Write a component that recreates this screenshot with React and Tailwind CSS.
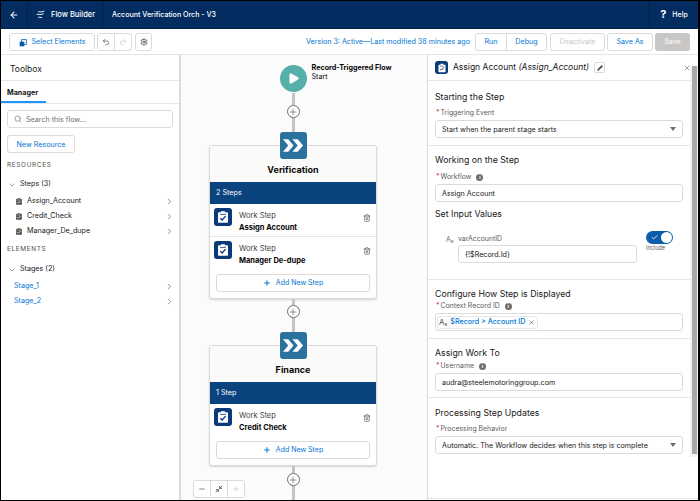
import { ArrowLeft, Undo2, Redo2, Settings, Search, ChevronDown, ChevronRight, Trash2, Plus, Minus, X, Pencil, Check, Play, Minimize2 } from 'lucide-react'

function ClipboardIcon({ className, body = 'white', mark = '#0b3a78' }) {
  return (
    <svg viewBox="0 0 24 24" className={className}>
      <path fill={body} d="M8.5 2h7v2H19a1.5 1.5 0 0 1 1.5 1.5v15A1.5 1.5 0 0 1 19 22H5a1.5 1.5 0 0 1-1.5-1.5v-15A1.5 1.5 0 0 1 5 4h3.5z" />
      <path d="M7 7.5h10" stroke={mark} strokeWidth="1.4" fill="none" />
      <path d="M7.5 14l3 3 6-6.5" stroke={mark} strokeWidth="2.4" fill="none" />
    </svg>
  )
}

function StepIcon({ size, icon }) {
  return (
    <span className={`${size} shrink-0 rounded-[3px] bg-[#0b3a78] flex items-center justify-center`}>
      <ClipboardIcon className={icon} />
    </span>
  )
}

function PlusNode() {
  return (
    <span className="w-[13px] h-[13px] shrink-0 rounded-full border border-[#706e6b] bg-white flex items-center justify-center">
      <Plus className="w-[10px] h-[10px] text-[#514f4d]" strokeWidth={1.5} />
    </span>
  )
}

function Line({ h }) {
  return <div className={`w-[3px] shrink-0 bg-[#c4c4c4] ${h}`} />
}

function StepRow({ name, border }) {
  return (
    <div className={`h-[33px] flex items-start pl-[4px] pr-[5px] pt-[4px] ${border ? 'border-b border-[#e5e5e5]' : ''}`}>
      <StepIcon size="w-[18px] h-[18px]" icon="w-[14px] h-[14px]" />
      <div className="ml-[7px] flex-1 pt-[2px] leading-[12px]">
        <div className="text-[7.5px] text-[#3e3e3c]">Work Step</div>
        <div className="text-[7.5px] font-bold text-[#080707]">{name}</div>
      </div>
      <Trash2 className="w-2 h-2 mt-[6px] text-[#706e6b]" strokeWidth={2.4} />
    </div>
  )
}

function StageCard({ title, count, children }) {
  return (
    <div className="shrink-0 flex flex-col items-center">
      <span className="relative z-10 w-[27px] h-[27px] rounded-[3px] bg-[#2a739e] flex items-center justify-center">
        <svg viewBox="0 0 19 12" className="w-[20px] h-[13px]">
          <polygon fill="white" points="0,0 5,0 10,6 5,12 0,12 5,6" />
          <polygon fill="white" points="9,0 14,0 19,6 14,12 9,12 14,6" />
        </svg>
      </span>
      <div className="w-[168px] -mt-[14px] rounded-[3px] border border-[#dddbda] bg-white shadow-[0_1px_2px_rgba(0,0,0,0.16)]">
        <div className="h-[36px] bg-[#fafaf9] flex items-end justify-center pb-[6px] text-[9px] leading-[12px] font-bold text-[#080707]">{title}</div>
        <div className="h-[22px] bg-[#0b437f] pl-[6px] flex items-center text-[7.2px] text-white">{count}</div>
        {children}
        <div className="px-[6px] pt-[4px] pb-[6px]">
          <div className="h-[18px] rounded-[3px] border border-[#dddbda] bg-white flex items-center justify-center gap-[5px] text-[7px] text-[#0176d3]">
            <Plus className="w-2 h-2" strokeWidth={3} />
            Add New Step
          </div>
        </div>
      </div>
    </div>
  )
}

function Label({ text, info }) {
  return (
    <div className="h-[11px] mb-px flex items-center text-[6.9px] leading-none">
      <span className="text-[#c23934] ml-px mr-px">*</span>
      <span className="text-[#5c5c5c]">{text}</span>
      {info && (
        <span className="ml-[5px] w-[7px] h-[7px] rounded-full bg-[#706e6b] text-white flex items-center justify-center text-[5px] font-bold">i</span>
      )}
    </div>
  )
}

function Field({ children, caret }) {
  return (
    <div className="h-[18px] rounded-[3px] border border-[#dddbda] bg-white flex items-center px-[6px] text-[7.15px] text-[#181818]">
      <span className="flex-1 pt-[2px]">{children}</span>
      {caret && <span className="w-0 h-0 border-l-[3px] border-r-[3px] border-t-[4px] border-l-transparent border-r-transparent border-t-[#706e6b]" />}
    </div>
  )
}

function TreeRow({ icon, label, link }) {
  return (
    <div className="h-[15px] flex items-center pr-[5px]">
      {icon ? (
        <>
          <ClipboardIcon className="ml-[14px] w-[8px] h-[9px]" body="#514f4d" mark="white" />
          <span className="ml-[4px] flex-1 text-[7.15px] text-[#181818]">{label}</span>
        </>
      ) : (
        <span className={`ml-[13px] flex-1 text-[7.15px] ${link ? 'text-[#0176d3]' : ''}`}>{label}</span>
      )}
      <ChevronRight className="w-[9px] h-[9px] text-[#514f4d]" strokeWidth={1.6} />
    </div>
  )
}

function Btn({ children, cls = '' }) {
  return <div className={`h-[18px] pt-[2px] rounded-[3px] border border-[#dddbda] bg-white flex items-center justify-center text-[7.15px] text-[#0176d3] ${cls}`}>{children}</div>
}

function Heading({ children, cls = '' }) {
  return <div className={`text-[8.75px] leading-[12px] text-[#181818] ${cls}`}>{children}</div>
}

export default function App() {
  return (
    <div className="w-[700px] h-[501px] bg-black pt-px pl-px pr-[2px] pb-px overflow-hidden" style={{ fontFamily: 'Inter, "Liberation Sans", sans-serif' }}>
      <div className="w-full h-full bg-white flex flex-col overflow-hidden">
        {/* Header */}
        <header className="h-[28px] shrink-0 bg-[#032d60] border-b border-[#021f45] flex items-center text-white text-[7.5px] font-medium">
          <div className="w-[27px] h-full flex items-center justify-center border-r border-[#021f45]">
            <ArrowLeft className="w-[10px] h-[10px]" strokeWidth={2.5} />
          </div>
          <div className="w-[75px] h-full flex items-center pl-[8px] gap-[6px] border-r border-[#021f45]">
            <svg viewBox="0 0 12 12" className="w-[9px] h-[9px]" fill="none" stroke="white" strokeWidth="1.3">
              <path d="M3 2.5C5 1.5 7 3.5 11 1.5" />
              <path d="M1 6C4 5 6 7 10 5" />
              <path d="M3 9.8C5 8.8 6 10.8 8 9.8" />
            </svg>
            <span className="pt-px">Flow Builder</span>
          </div>
          <div className="pl-[9px] pt-px flex-1 text-[7.1px]">Account Verification Orch - V3</div>
          <div className="w-[49px] h-full flex items-center justify-center gap-[6px] border-l border-[#021f45] text-[7px]">
            <span className="text-[11px] font-bold">?</span>
            <span className="pt-px">Help</span>
          </div>
        </header>

        {/* Toolbar */}
        <div className="h-[26px] shrink-0 flex items-center pl-[8px] pr-[8px] border-b border-[#e5e5e5] text-[7.15px]">
          <Btn cls="w-[86px] gap-[5px]">
            <svg viewBox="0 0 12 12" className="w-[8px] h-[8px]">
              <rect x="4" y="1" width="7" height="7" fill="none" stroke="#0b5cab" strokeWidth="1.2" />
              <rect x="1" y="4" width="7" height="7" fill="#0b5cab" />
            </svg>
            Select Elements
          </Btn>
          <div className="ml-[2px] h-[18px] w-[35px] flex rounded-[3px] border border-[#dddbda]">
            <div className="flex-1 flex items-center justify-center border-r border-[#dddbda]">
              <Undo2 className="w-[8px] h-[8px] text-[#514f4d]" />
            </div>
            <div className="flex-1 flex items-center justify-center">
              <Redo2 className="w-[8px] h-[8px] text-[#c9c7c5]" />
            </div>
          </div>
          <div className="ml-[3px] w-[17px] h-[18px] rounded-[3px] border border-[#dddbda] flex items-center justify-center">
            <Settings className="w-[8px] h-[8px] text-[#514f4d]" strokeWidth={2.5} />
          </div>
          <div className="ml-auto pt-[2px] text-[#0176d3] mr-[5px]">Version 3: Active—Last modified 38 minutes ago</div>
          <div className="h-[18px] w-[72px] pt-0 flex rounded-[3px] border border-[#dddbda] text-[#0176d3]">
            <div className="w-[31px] pt-[2px] flex items-center justify-center border-r border-[#dddbda]">Run</div>
            <div className="flex-1 pt-[2px] flex items-center justify-center">Debug</div>
          </div>
          <div className="ml-[3px] w-[55px] h-[18px] pt-[2px] rounded-[3px] border border-[#dddbda] flex items-center justify-center text-[#c9c7c5]">Deactivate</div>
          <Btn cls="ml-[2px] w-[46px]">Save As</Btn>
          <div className="ml-[2px] w-[35px] h-[18px] pt-[2px] rounded-[3px] bg-[#c9c7c5] flex items-center justify-center text-white">Save</div>
        </div>

        <div className="flex-1 flex min-h-0">
          {/* Toolbox */}
          <aside className="w-[180px] shrink-0 border-r-2 border-[#dddbda] flex flex-col">
            <div className="h-[26px] shrink-0 pt-[3px] flex items-center pl-[9px] text-[8.5px] text-[#181818] border-b border-[#e5e5e5]">Toolbox</div>
            <div className="h-[23px] shrink-0 pt-[3px] border-b border-[#e5e5e5] relative flex items-center pl-[6px] text-[7.2px] font-bold text-[#181818]">
              Manager
              <span className="absolute left-0 bottom-0 w-[45px] h-[2px] bg-[#1b96ff]" />
            </div>
            <div className="px-[6px] pt-[6px]">
              <div className="h-[18px] rounded-[3px] border border-[#dddbda] flex items-center pl-[6px] gap-[4px] text-[7.15px] text-[#706e6b]">
                <Search className="w-[8px] h-[8px]" strokeWidth={2} />
                <span className="pt-[2px]">Search this flow...</span>
              </div>
              <Btn cls="mt-[7px] w-[68px]">New Resource</Btn>
            </div>
            <div className="mt-[7px] pl-[6px] h-[12px] flex items-center text-[6.5px] tracking-[0.6px] text-[#514f4d]">RESOURCES</div>
            <div className="mt-[5px] pl-[7px] h-[15px] flex items-center gap-[4px] text-[7.15px] text-[#181818]">
              <ChevronDown className="w-[8px] h-[8px] text-[#706e6b]" />
              Steps (3)
            </div>
            <div className="mt-[2px]">
              <TreeRow icon label="Assign_Account" />
              <TreeRow icon label="Credit_Check" />
              <TreeRow icon label="Manager_De_dupe" />
            </div>
            <div className="mt-[5px] pl-[6px] h-[12px] flex items-center text-[6.5px] tracking-[0.6px] text-[#514f4d]">ELEMENTS</div>
            <div className="mt-[6px] pl-[7px] h-[15px] flex items-center gap-[4px] text-[7.15px] text-[#181818]">
              <ChevronDown className="w-[8px] h-[8px] text-[#706e6b]" />
              Stages (2)
            </div>
            <div className="mt-[2px]">
              <TreeRow link label="Stage_1" />
              <TreeRow link label="Stage_2" />
            </div>
          </aside>

          {/* Canvas */}
          <main className="relative w-[246px] shrink-0 bg-[#fbfbfb] overflow-hidden flex flex-col items-center pt-[10px] pr-[22px]">
            <div className="relative shrink-0">
              <span className="w-[27px] h-[27px] rounded-full bg-[#54b0a9] flex items-center justify-center">
                <Play className="w-[13px] h-[13px] text-white ml-px" fill="white" strokeWidth={1} />
              </span>
              <div className="absolute left-[32px] -top-[2px] leading-[9px] whitespace-nowrap text-[7.2px] text-[#080707]">
                <div className="font-bold">Record-Triggered Flow</div>
                <div>Start</div>
              </div>
            </div>
            <Line h="h-[12px] mt-px" />
            <PlusNode />
            <Line h="h-[14px]" />
            <StageCard title="Verification" count="2 Steps">
              <StepRow name="Assign Account" border />
              <StepRow name="Manager De-dupe" />
            </StageCard>
            <Line h="h-[6px]" />
            <PlusNode />
            <Line h="h-[14px]" />
            <StageCard title="Finance" count="1 Step">
              <StepRow name="Credit Check" />
            </StageCard>
            <Line h="h-[7px]" />
            <PlusNode />
            <Line h="h-[20px]" />
            {/* zoom controls */}
            <div className="absolute left-[12px] bottom-[2px] h-[18px] w-[52px] flex rounded-[3px] border border-[#dddbda] bg-white">
              <div className="flex-1 flex items-center justify-center border-r border-[#dddbda]">
                <Minus className="w-[8px] h-[8px] text-[#514f4d]" />
              </div>
              <div className="flex-1 flex items-center justify-center border-r border-[#dddbda]">
                <Minimize2 className="w-[8px] h-[8px] text-[#514f4d]" strokeWidth={2.5} />
              </div>
              <div className="flex-1 flex items-center justify-center">
                <Plus className="w-[8px] h-[8px] text-[#c9c7c5]" />
              </div>
            </div>
          </main>

          {/* Properties panel */}
          <section className="flex-1 border-l border-[#dddbda] flex flex-col min-w-0 relative pr-[8px]">
            <div className="h-[26px] shrink-0 flex items-center pl-[7px] border-b border-[#e5e5e5]">
              <StepIcon size="w-[13px] h-[13px]" icon="w-[10px] h-[10px]" />
              <span className="ml-[5px] text-[8.5px] text-[#181818]">Assign Account <em>(Assign_Account)</em></span>
              <span className="ml-[5px] w-[11px] h-[11px] rounded-[2px] border border-[#dddbda] flex items-center justify-center">
                <Pencil className="w-[6px] h-[6px] text-[#514f4d]" fill="#514f4d" />
              </span>
              <X className="absolute right-[7px] top-[9px] w-[8px] h-[8px] text-[#706e6b]" />
            </div>
            <div className="h-[65px] shrink-0 px-[7px] pt-[10px] border-b border-[#e5e5e5]">
              <Heading cls="mb-[5px]">Starting the Step</Heading>
              <Label text="Triggering Event" />
              <Field caret>Start when the parent stage starts</Field>
            </div>
            <div className="h-[134px] shrink-0 px-[7px] pt-[8px] border-b border-[#e5e5e5]">
              <Heading cls="mb-[6px]">Working on the Step</Heading>
              <Label text="Workflow" info />
              <Field>Assign Account</Field>
              <Heading cls="mt-[6px]">Set Input Values</Heading>
              <div className="mt-[14px] flex items-start">
                <span className="ml-[11px] w-[12px] text-[7px] text-[#706e6b] leading-[11px]">A<sub className="text-[5px]">a</sub></span>
                <div className="w-[179px]">
                  <div className="h-[11px] flex items-center text-[6.9px] text-[#5c5c5c]">varAccountID</div>
                  <Field>{'{!$Record.Id}'}</Field>
                </div>
                <div className="ml-[9px] -mt-[3px] flex flex-col">
                  <span className="w-[27px] h-[13px] rounded-full bg-[#0b5cab] flex items-center justify-between pl-[5px] pr-px">
                    <Check className="w-[7px] h-[7px] text-white" strokeWidth={3} />
                    <span className="w-[11px] h-[11px] rounded-full bg-white" />
                  </span>
                  <span className="text-[5.5px] leading-[8px] text-[#5c5c5c]">Include</span>
                </div>
              </div>
            </div>
            <div className="h-[59px] shrink-0 px-[7px] pt-[8px] border-b border-[#e5e5e5]">
              <Heading cls="mb-px">Configure How Step is Displayed</Heading>
              <Label text="Context Record ID" info />
              <div className="h-[18px] rounded-[3px] border border-[#dddbda] flex items-center pl-px">
                <span className="h-[13px] w-[101px] rounded-[3px] border border-[#e5e5e5] flex items-center pl-px gap-[3px] text-[7.15px] font-medium text-[#0176d3]">
                  <span className="text-[8px] font-normal text-[#514f4d] leading-none">A<sub className="text-[5px]">a</sub></span>
                  $Record &gt; Account ID
                  <X className="w-[7px] h-[7px] text-[#514f4d]" />
                </span>
              </div>
            </div>
            <div className="h-[59px] shrink-0 px-[7px] pt-[8px] border-b border-[#e5e5e5]">
              <Heading cls="mb-[2px]">Assign Work To</Heading>
              <Label text="Username" info />
              <Field>audra@steelemotoringgroup.com</Field>
            </div>
            <div className="px-[7px] pt-[9px]">
              <Heading cls="mb-[5px]">Processing Step Updates</Heading>
              <Label text="Processing Behavior" />
              <Field caret>Automatic. The Workflow decides when this step is complete</Field>
            </div>
            <div className="mt-auto mb-[1px] -mr-[8px] border-t border-[#e5e5e5]" />
            {/* scrollbar */}
            <div className="absolute right-0 top-[11px] w-[8px] h-[391px] bg-[#f3f3f3] flex justify-center">
              <span className="w-[5px] h-[388px] bg-[#a8a8a8]" />
            </div>
          </section>
        </div>
      </div>
    </div>
  )
}
